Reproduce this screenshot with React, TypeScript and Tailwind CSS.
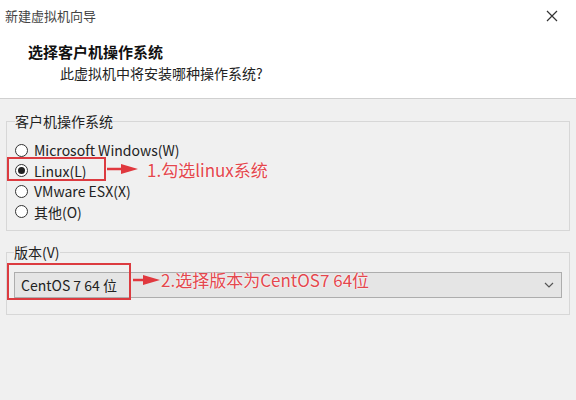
import React from "react";

const font = { fontFamily: '"Noto Sans CJK SC", "Noto Sans", sans-serif' };

function Radio({ checked, label }: { checked?: boolean; label: string }) {
  return (
    <div className="flex h-[20.5px] items-center gap-[6px]">
      <span className="flex h-[13px] w-[13px] items-center justify-center rounded-full border border-[#333] bg-white">
        {checked && <span className="h-[7px] w-[7px] rounded-full bg-[#222]" />}
      </span>
      <span className="text-[14px] leading-[20px] text-[#222]">{label}</span>
    </div>
  );
}

export default function App() {
  return (
    <div className="relative flex h-[400px] w-[576px] flex-col overflow-hidden bg-[#f0f0f0]" style={font}>
      <div className="relative h-[99px] shrink-0 border-b border-[#d0d0d0] bg-white">
        <div className="pl-[5px] pt-[7px] text-[13px] leading-[18px] text-[#444]">新建虚拟机向导</div>
        <svg className="absolute right-[18px] top-[10px]" width="12" height="12" viewBox="0 0 12 12">
          <path d="M1 1 L11 11 M11 1 L1 11" stroke="#333" strokeWidth="1.2" />
        </svg>
        <div className="mt-[17px] pl-[28px] text-[15px] font-bold leading-[20px] text-[#111]">选择客户机操作系统</div>
        <div className="mt-[1px] pl-[60px] text-[14px] leading-[20px] text-[#222]">此虚拟机中将安装哪种操作系统?</div>
      </div>

      <fieldset className="mx-[6px] mt-[12px] border border-[#d7d7d7] px-[8px] pb-[8px] pt-[9px]">
        <legend className="px-0 text-[14px] leading-[20px] text-[#222]">客户机操作系统</legend>
        <Radio label="Microsoft Windows(W)" />
        <Radio checked label="Linux(L)" />
        <Radio label="VMware ESX(X)" />
        <Radio label="其他(O)" />
      </fieldset>

      <fieldset className="mx-[6px] mt-[11px] border border-[#d7d7d7] px-[7px] pb-[16px] pt-[10px]">
        <legend className="px-0 text-[14px] leading-[20px] text-[#222]">版本(V)</legend>
        <div className="flex h-[26px] items-center justify-between border border-[#adadad] bg-[#e5e5e5] pl-[6px] pr-[7px]">
          <span className="text-[14px] leading-[20px] text-[#222]">CentOS 7 64 位</span>
          <svg width="10" height="6" viewBox="0 0 10 6">
            <path d="M1 1 L5 5 L9 1" stroke="#555" strokeWidth="1.2" fill="none" />
          </svg>
        </div>
      </fieldset>

      {/* annotations */}
      <div className="absolute left-[7px] top-[157px] h-[24px] w-[99px] border-2 border-[#dc3b40]" />
      <svg className="absolute left-[107px] top-[163px]" width="32" height="12" viewBox="0 0 32 12">
        <path d="M0 6 H18" stroke="#e0383e" strokeWidth="2.5" />
        <path d="M14 1 L31 6 L14 11 Z" fill="#e0383e" />
      </svg>
      <div className="absolute left-[147px] top-[158px] text-[17px] leading-[24px] text-[#e3474d] [text-shadow:0_0_2px_#fff,0_0_1px_#fff]">
        1.勾选linux系统
      </div>

      <div className="absolute left-[7px] top-[263px] h-[37px] w-[124px] border-2 border-[#dc3b40]" />
      <svg className="absolute left-[133px] top-[274px]" width="28" height="12" viewBox="0 0 28 12">
        <path d="M0 6 H14" stroke="#e0383e" strokeWidth="2.5" />
        <path d="M10 1 L27 6 L10 11 Z" fill="#e0383e" />
      </svg>
      <div className="absolute left-[161px] top-[268px] text-[17px] leading-[24px] text-[#e3474d] [text-shadow:0_0_2px_#fff,0_0_1px_#fff]">
        2.选择版本为CentOS7 64位
      </div>
    </div>
  );
}
